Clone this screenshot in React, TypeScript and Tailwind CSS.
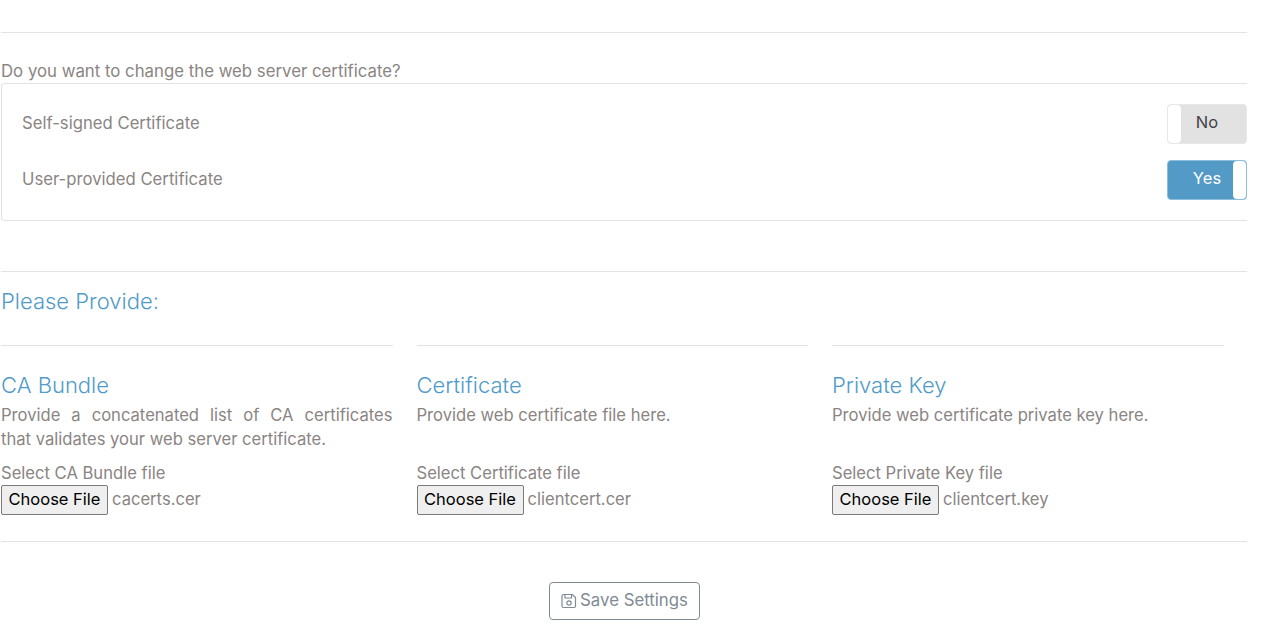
const FILES = [
  {
    title: "CA Bundle",
    lead: "Provide a concatenated list of CA certificates",
    text: "that validates your web server certificate.",
    label: "Select CA Bundle file",
    file: "cacerts.cer",
  },
  {
    title: "Certificate",
    lead: "",
    text: "Provide web certificate file here.",
    label: "Select Certificate file",
    file: "clientcert.cer",
  },
  {
    title: "Private Key",
    lead: "",
    text: "Provide web certificate private key here.",
    label: "Select Private Key file",
    file: "clientcert.key",
  },
];

function Toggle({ on }: { on: boolean }) {
  return (
    <div
      className={
        on
          ? "relative flex h-[40px] w-[80px] items-center justify-center rounded-[4px] border border-[#8dbfdc] bg-[#539ac6] pb-[3px] text-[16.5px] text-white"
          : "relative flex h-[40px] w-[80px] items-center justify-center rounded-[4px] border border-[#e8e8e8] bg-[#e2e2e2] pb-[3px] text-[16.5px] text-[#444444]"
      }
    >
      {on ? "Yes" : "No"}
      <span
        className={
          on
            ? "absolute bottom-0 right-0 top-0 w-[13px] rounded-[4px] bg-white"
            : "absolute bottom-0 left-0 top-0 w-[13px] rounded-[4px] bg-white"
        }
      />
    </div>
  );
}

// floppy icon, square with a notch, top bar and a ring in the middle
function SaveIcon() {
  return (
    <svg width="16" height="16" viewBox="0 0 16 16" fill="none" stroke="currentColor" strokeWidth="1.2">
      <path d="M2.5 1.5h9l3 3v8.5a1.5 1.5 0 0 1-1.5 1.5h-10.5a1.5 1.5 0 0 1-1.5-1.5v-10a1.5 1.5 0 0 1 1.5-1.5z" />
      <path d="M4 1.5v3.5h6.5v-3.5" />
      <circle cx="8" cy="10" r="2.2" />
    </svg>
  );
}

function FileColumn({ title, lead, text, label, file }: (typeof FILES)[number]) {
  return (
    <div className="w-[391.5px]">
      <div className="border-t border-[#e3e3e3] pt-[24px]">
        <h4 className="h-[30px] text-[22px] font-light leading-[30px] text-[#4f9bc9]">{title}</h4>
        <div className="mt-[2.6px] h-[48px] text-[16.6px] leading-[24px] text-[#8a8583]">
          {lead && <p className="text-justify [text-align-last:justify]">{lead}</p>}
          <p>{text}</p>
        </div>
        <div className="mt-[10px] h-[24px] text-[16.6px] leading-[24px] text-[#8a8583]">{label}</div>
        <div className="mt-[0.4px] flex items-center gap-[4px]">
          <button className="h-[30px] w-[107px] rounded-[2px] border border-[#7a7a7a] bg-[#efefef] pb-[1px] text-[16.5px] text-black">
            Choose File
          </button>
          <span className="pb-[1px] text-[16.6px] text-[#8a8583]">{file}</span>
        </div>
      </div>
    </div>
  );
}

export default function App() {
  return (
    <div className="h-[638px] w-[1264px] overflow-hidden bg-white pl-[1px] pt-[32px] font-['Inter','Liberation_Sans',sans-serif]">
      <div className="w-[1246px]">
        <div className="border-t border-[#e3e3e3] pt-[25.5px]">
          <div className="h-[24.5px] text-[16.8px] leading-[25px] text-[#8a8583]">
            Do you want to change the web server certificate?
          </div>
          <div className="h-[138px] rounded-l-[4px] border-y border-l border-[#e3e3e3] pl-[20px] pt-[20px]">
            <div className="flex h-[40px] items-center justify-between text-[16.7px] text-[#8a8583]">
              <span className="pb-[1px]">Self-signed Certificate</span>
              <Toggle on={false} />
            </div>
            <div className="mt-[16px] flex h-[40px] items-center justify-between text-[16.7px] text-[#8a8583]">
              <span className="pb-[1px]">User-provided Certificate</span>
              <Toggle on={true} />
            </div>
          </div>
        </div>

        <div className="mt-[50px] border-t border-[#e3e3e3] pt-[14px]">
          <h3 className="h-[30px] text-[22px] font-light leading-[30px] text-[#4f9bc9]">Please Provide:</h3>
        </div>

        <div className="mt-[29px] flex gap-[24px]">
          {FILES.map((f) => (
            <FileColumn key={f.title} {...f} />
          ))}
        </div>

        <div className="mt-[26px] border-t border-[#e3e3e3] pt-[40px]">
          <div className="ml-[548px] flex h-[38px] w-[151px] items-center justify-center gap-[3px] rounded-[4px] border border-[#7f8a93] text-[16.8px] text-[#7f8a93]">
            <SaveIcon />
            <span>Save Settings</span>
          </div>
        </div>
      </div>
    </div>
  );
}
